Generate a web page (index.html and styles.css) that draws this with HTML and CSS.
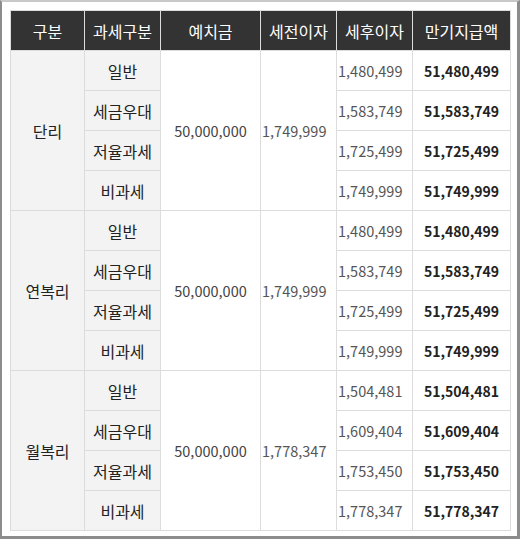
FILE: index.html
```html
<!DOCTYPE html>
<html lang="ko">
<head>
<meta charset="utf-8">
<link rel="stylesheet" href="styles.css">
</head>
<body>
<div class="frame">
<table class="rates">
<colgroup>
<col class="c1"><col class="c2"><col class="c3"><col class="c4"><col class="c5"><col class="c6">
</colgroup>
<thead>
<tr><th>구분</th><th>과세구분</th><th>예치금</th><th>세전이자</th><th>세후이자</th><th>만기지급액</th></tr>
</thead>
<tbody class="grp">
<tr><td class="kind" rowspan="4">단리</td><td class="tax">일반</td><td class="dep" rowspan="4">50,000,000</td><td class="pre" rowspan="4">1,749,999</td><td class="post">1,480,499</td><td class="total">51,480,499</td></tr>
<tr><td class="tax">세금우대</td><td class="post">1,583,749</td><td class="total">51,583,749</td></tr>
<tr><td class="tax">저율과세</td><td class="post">1,725,499</td><td class="total">51,725,499</td></tr>
<tr><td class="tax">비과세</td><td class="post">1,749,999</td><td class="total">51,749,999</td></tr>
</tbody>
<tbody class="grp">
<tr><td class="kind" rowspan="4">연복리</td><td class="tax">일반</td><td class="dep" rowspan="4">50,000,000</td><td class="pre" rowspan="4">1,749,999</td><td class="post">1,480,499</td><td class="total">51,480,499</td></tr>
<tr><td class="tax">세금우대</td><td class="post">1,583,749</td><td class="total">51,583,749</td></tr>
<tr><td class="tax">저율과세</td><td class="post">1,725,499</td><td class="total">51,725,499</td></tr>
<tr><td class="tax">비과세</td><td class="post">1,749,999</td><td class="total">51,749,999</td></tr>
</tbody>
<tbody class="grp">
<tr><td class="kind" rowspan="4">월복리</td><td class="tax">일반</td><td class="dep" rowspan="4">50,000,000</td><td class="pre" rowspan="4">1,778,347</td><td class="post">1,504,481</td><td class="total">51,504,481</td></tr>
<tr><td class="tax">세금우대</td><td class="post">1,609,404</td><td class="total">51,609,404</td></tr>
<tr><td class="tax">저율과세</td><td class="post">1,753,450</td><td class="total">51,753,450</td></tr>
<tr><td class="tax">비과세</td><td class="post">1,778,347</td><td class="total">51,778,347</td></tr>
</tbody>
</table>
</div>
</body>
</html>
```
FILE: styles.css
```css
html, body {
  margin: 0;
  padding: 0;
  background: #fff;
}
body {
  font-family: "Noto Sans CJK KR", "Noto Sans", sans-serif;
  color: #333;
}
.frame {
  width: 520px;
  height: 539px;
  box-sizing: border-box;
  border-top: 2px solid #c8c8c8;
  border-left: 2px solid #8c8c8c;
  border-right: 3px solid #8c8c8c;
  border-bottom: 3px solid #8c8c8c;
  padding: 8px 7px 0 8px;
}
.rates {
  width: 500px;
  border-collapse: collapse;
  table-layout: fixed;
  border: 1px solid #dcdcdc;
}
.c1 { width: 74px; }
.c2 { width: 76px; }
.c3 { width: 100px; }
.c4 { width: 76px; }
.c5 { width: 76px; }
.c6 { width: 98px; }
.rates th {
  height: 39px;
  padding: 0;
  background: #333;
  color: #fff;
  font-size: 16px;
  font-weight: normal;
  border-left: 1px solid #ddd;
  text-align: center;
}
.rates th:first-child { border-left: none; }
.rates td {
  height: 39px;
  padding: 0;
  font-size: 14px;
  border: 1px solid #dcdcdc;
  text-align: center;
  white-space: nowrap;
}
.grp tr + tr td.tax,
.grp tr + tr td.post,
.grp tr + tr td.total {
  border-top: 1px dashed #d6d6d6;
}
.rates td.kind, .rates td.tax {
  background: #f3f3f3;
  font-size: 16px;
  color: #222;
}
.rates td.dep {
  color: #444;
  font-size: 14.5px;
}
.rates td.pre, .rates td.post {
  text-align: left;
  color: #555;
  font-size: 14.5px;
  padding-left: 1px;
}
.rates td.total {
  font-weight: bold;
  color: #222;
  font-size: 14px;
}
```
